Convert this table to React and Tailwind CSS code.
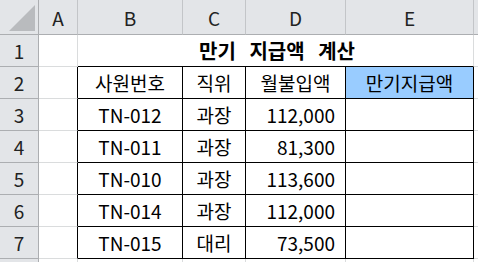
import React from 'react';

const cols = [
  { key: 'A', w: 'w-[39px]' },
  { key: 'B', w: 'w-[105px]' },
  { key: 'C', w: 'w-[63px]' },
  { key: 'D', w: 'w-[100px]' },
  { key: 'E', w: 'w-[128px]' },
];

const rows = [
  ['TN-012', '과장', '112,000'],
  ['TN-011', '과장', '81,300'],
  ['TN-010', '과장', '113,600'],
  ['TN-014', '과장', '112,000'],
  ['TN-015', '대리', '73,500'],
];

const RowHead = ({ n }) => (
  <div className="w-[39px] shrink-0 h-full flex items-center justify-center bg-[#e3e5e8] border-r border-b border-[#acaeb1] text-[#222]">
    {n}
  </div>
);

const App = () => {
  return (
    <div
      className="w-[478px] h-[262px] overflow-hidden bg-white text-[19px] leading-none text-black"
      style={{ fontFamily: '"Noto Sans CJK KR", "Noto Sans", sans-serif' }}
    >
      {/* column headers */}
      <div className="flex h-[35px]">
        <div className="w-[39px] shrink-0 relative bg-[#e3e5e8] border-r border-b border-[#acaeb1]">
          <div className="absolute right-[3px] bottom-[3px] w-0 h-0 border-l-[26px] border-l-transparent border-b-[26px] border-b-[#b9bbbe]" />
        </div>
        {cols.map((c) => (
          <div key={c.key} className={`${c.w} shrink-0 flex items-center justify-center bg-[#e3e5e8] border-r border-b border-[#c3c5c8] border-b-[#acaeb1] text-[#222]`}>
            {c.key}
          </div>
        ))}
        <div className="flex-1 bg-[#e3e5e8] border-b border-[#acaeb1]" />
      </div>

      {/* row 1 title */}
      <div className="flex h-[32px]">
        <RowHead n={1} />
        <div className="w-[39px] shrink-0 border-r border-b border-[#dadcdd]" />
        <div className="w-[396px] shrink-0 flex items-center justify-center font-bold text-[20px] [word-spacing:9px] pl-[3px] border-r border-b border-[#dadcdd] border-b-black">
          만기 지급액 계산
        </div>
        <div className="flex-1 border-b border-[#dadcdd]" />
      </div>

      {/* row 2 header */}
      <div className="flex h-[32px]">
        <RowHead n={2} />
        <div className="w-[39px] shrink-0 border-r border-b border-black border-b-[#dadcdd]" />
        <div className="w-[105px] shrink-0 flex items-center justify-center border-r border-b border-black">사원번호</div>
        <div className="w-[63px] shrink-0 flex items-center justify-center border-r border-b border-black">직위</div>
        <div className="w-[100px] shrink-0 flex items-center justify-center border-r border-b border-black">월불입액</div>
        <div className="w-[128px] shrink-0 flex items-center justify-center bg-[#99ccff] border-r border-b border-black">만기지급액</div>
        <div className="flex-1 border-b border-[#dadcdd]" />
      </div>

      {rows.map((r, i) => (
        <div key={r[0]} className="flex h-[32px]">
          <RowHead n={i + 3} />
          <div className="w-[39px] shrink-0 border-r border-b border-black border-b-[#dadcdd]" />
          <div className="w-[105px] shrink-0 flex items-center justify-center border-r border-b border-black">{r[0]}</div>
          <div className="w-[63px] shrink-0 flex items-center justify-center border-r border-b border-black">{r[1]}</div>
          <div className="w-[100px] shrink-0 flex items-center justify-end pr-[10px] border-r border-b border-black">{r[2]}</div>
          <div className="w-[128px] shrink-0 border-r border-b border-black" />
          <div className="flex-1 border-b border-[#dadcdd]" />
        </div>
      ))}

      {/* partial row 8 */}
      <div className="flex h-[32px]">
        <div className="w-[39px] shrink-0 h-full bg-[#e3e5e8] border-r border-[#acaeb1]" />
        <div className="w-[39px] shrink-0 border-r border-[#dadcdd]" />
        <div className="w-[105px] shrink-0 border-r border-[#dadcdd]" />
        <div className="w-[63px] shrink-0 border-r border-[#dadcdd]" />
        <div className="w-[100px] shrink-0 border-r border-[#dadcdd]" />
        <div className="w-[128px] shrink-0 border-r border-[#dadcdd]" />
      </div>
    </div>
  );
};

export default App;
